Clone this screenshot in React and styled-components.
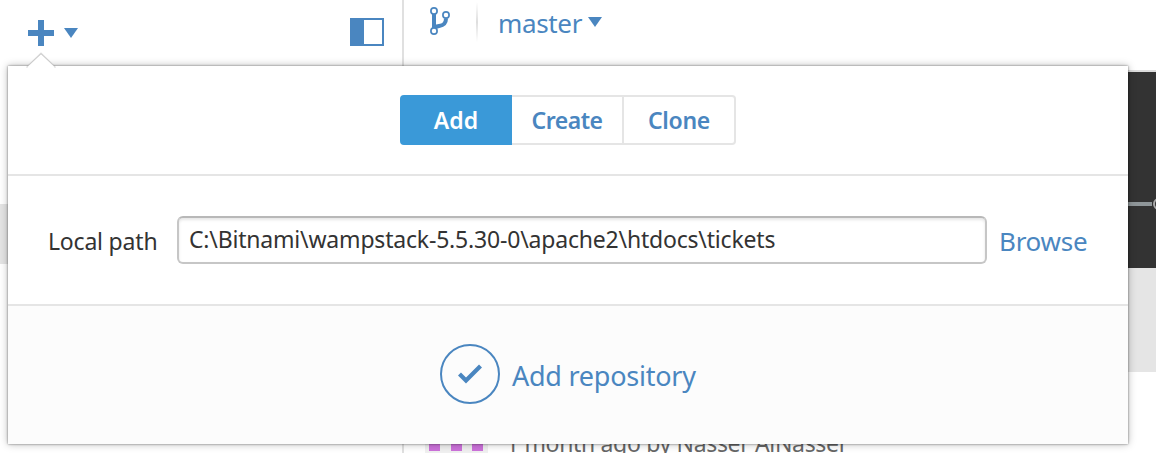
import React from "react";
import styled, { createGlobalStyle } from "styled-components";

const blue = "#4a86c0";
const line = "#e5e5e5";

const GlobalStyle = createGlobalStyle`
  * { box-sizing: border-box; }
  body {
    margin: 0;
    background: #fff;
    overflow: hidden;
    font-family: "Segoe UI", "Noto Sans", "Open Sans", sans-serif;
    color: #333;
  }
`;

const Window = styled.div`
  position: relative;
  display: flex;
  width: 1156px;
  height: 453px;
  overflow: hidden;
  background: #fff;
`;

const Sidebar = styled.aside`
  display: flex;
  flex-direction: column;
  width: 404px;
  border-right: 2px solid #e0e0e0;
`;

const SidebarBar = styled.header`
  display: flex;
  align-items: flex-start;
  height: 72px;
  padding: 18px 18px 0 28px;
`;

const AddIcon = styled.svg`
  margin-top: 2px;
`;

const Caret = styled.svg`
  margin: ${(p) => p.$margin};
`;

const PanelIcon = styled.svg`
  margin-left: auto;
`;

const SelectedRepository = styled.div`
  height: 60px;
  margin-top: 132px;
  background: #e4e4e4;
`;

const Main = styled.main`
  display: flex;
  flex: 1;
  flex-direction: column;
  > * { flex-shrink: 0; }
`;

const BranchBar = styled.header`
  display: flex;
  align-items: flex-start;
  height: 72px;
  padding-left: 25px;
  border-bottom: 2px solid #dcdcdc;
`;

const BranchIcon = styled.svg`
  margin-top: 6px;
`;

const BarDivider = styled.div`
  width: 2px;
  height: 40px;
  margin: 2px 20px 0 25px;
  background: linear-gradient(#fff, #dedede 50%, #fff);
`;

const BranchName = styled.span`
  padding-top: 5px;
  font-size: 26px;
  line-height: 36px;
  letter-spacing: -0.35px;
  color: ${blue};
`;

const Timeline = styled.div`
  display: flex;
  justify-content: flex-end;
  align-items: center;
  height: 196px;
  padding-top: 68px;
  background: #333;
`;

const Summary = styled.div`
  height: 104px;
  background: ${line};
`;

const Commit = styled.div`
  display: flex;
  align-items: flex-start;
  padding: 20px 0 0 21px;
`;

const CommitMeta = styled.span`
  margin: 35px 0 0 18px;
  font-size: 23px;
  line-height: 32px;
  letter-spacing: -0.34px;
  white-space: nowrap;
  color: #666;
`;

const Popover = styled.section`
  position: absolute;
  top: 66px;
  left: 8px;
  display: flex;
  flex-direction: column;
  width: 1120px;
  height: 378px;
  background: #fff;
  box-shadow: 0 0 2px rgba(0, 0, 0, 0.5), 0 0 8px rgba(0, 0, 0, 0.28);
`;

const Pointer = styled.svg`
  position: absolute;
  top: -15px;
  left: 16px;
`;

const TabSection = styled.div`
  display: flex;
  justify-content: center;
  height: 110px;
  padding-top: 29px;
  border-bottom: 2px solid ${line};
`;

const Tabs = styled.div`
  display: flex;
  height: 50px;
`;

const Tab = styled.button`
  width: 112px;
  padding: 0 0 1px;
  border: solid ${(p) => (p.$active ? "#3a99d8" : line)};
  border-width: 2px 2px 2px ${(p) => (p.$active ? "2px" : "0")};
  background: ${(p) => (p.$active ? "#3a99d8" : "#fff")};
  color: ${(p) => (p.$active ? "#fff" : blue)};
  font: 600 23px/44px "Segoe UI", "Noto Sans", "Open Sans", sans-serif;
  letter-spacing: ${(p) => p.$spacing};
  &:first-child { border-radius: 4px 0 0 4px; }
  &:last-child { border-radius: 0 4px 4px 0; }
`;

const PathSection = styled.div`
  display: flex;
  align-items: center;
  height: 130px;
  padding: 0 40px;
  border-bottom: 2px solid ${line};
`;

const Label = styled.label`
  width: 129px;
  padding-top: 2px;
  font-size: 23px;
  letter-spacing: -0.2px;
  white-space: nowrap;
`;

const PathField = styled.input`
  width: 810px;
  height: 48px;
  padding: 0 10px 2px;
  border: 2px solid #c6c6c6;
  border-top-color: #b8b8b8;
  border-radius: 6px;
  outline: none;
  box-shadow: inset 0 2px 3px rgba(0, 0, 0, 0.1);
  color: #333;
  font: 23px "Segoe UI", "Noto Sans", "Open Sans", sans-serif;
  letter-spacing: -0.19px;
`;

const Browse = styled.a`
  margin-left: 12px;
  padding-top: 2px;
  font-size: 26px;
  letter-spacing: -0.25px;
  color: ${blue};
`;

const Footer = styled.footer`
  display: flex;
  flex: 1;
  align-items: center;
  gap: 12px;
  padding: 0 0 2px 432px;
  background: #fcfcfc;
`;

const Submit = styled.span`
  padding-top: 3px;
  font-size: 27px;
  letter-spacing: -0.25px;
  white-space: nowrap;
  color: ${blue};
`;

export default function App() {
  return (
    <>
      <GlobalStyle />
      <Window>
        <Sidebar>
          <SidebarBar>
            <AddIcon width="26" height="26" fill={blue}>
              <path d="M10 0h6v10h10v6H16v10h-6V16H0v-6h10z" />
            </AddIcon>
            <Caret $margin="10px 0 0 10px" width="14" height="10" fill={blue}>
              <path d="M0 0h14L7 10z" />
            </Caret>
            <PanelIcon width="34" height="28">
              <rect x="1" y="1" width="32" height="26" fill="none" stroke={blue} strokeWidth="2" />
              <rect width="14" height="28" fill={blue} />
            </PanelIcon>
          </SidebarBar>
          <SelectedRepository />
        </Sidebar>
        <Main>
          <BranchBar>
            <BranchIcon width="22" height="30" fill="none" stroke={blue}>
              <path d="M5 8v14M17 12.500c0 6.500-4 7-7 7.500-3 .5-4.500 1.500-5 3" strokeWidth="4" />
              <circle cx="5" cy="5" r="3.100" fill="#fff" strokeWidth="1.700" />
              <circle cx="17" cy="9" r="3.100" fill="#fff" strokeWidth="1.700" />
              <circle cx="5" cy="25" r="3.100" fill="#fff" strokeWidth="1.700" />
            </BranchIcon>
            <BarDivider />
            <BranchName>master</BranchName>
            <Caret $margin="17px 0 0 6px" width="14" height="10" fill={blue}>
              <path d="M0 0h14L7 10z" />
            </Caret>
          </BranchBar>
          <Timeline>
            <svg width="28" height="14">
              <path d="M0 7h24" stroke="#8f9699" strokeWidth="4" />
              <circle cx="31" cy="7" r="5" fill="#333" stroke="#aaa" strokeWidth="2" />
            </svg>
          </Timeline>
          <Summary />
          <Commit>
            <svg width="63" height="61">
              <rect width="63" height="61" fill="#f0f0f0" />
              <path d="M4 48h11v11H4zM26 48h11v11H26zM47 48h11v11H47z" fill="#cd72db" />
            </svg>
            <CommitMeta>1 month ago by Nasser AlNasser</CommitMeta>
          </Commit>
        </Main>
        <Popover>
          <Pointer width="34" height="17">
            <path d="M2 15.500 17 1 32 15.500V17H2z" fill="#000" fillOpacity=".07" />
            <path d="M3 15.500 17 2 31 15.500z" fill="#c4c4c4" />
            <path d="M4 15.500 17 3.200 30 15.500V17H4z" fill="#fff" />
          </Pointer>
          <TabSection>
            <Tabs>
              <Tab $active $spacing="0">Add</Tab>
              <Tab $spacing="-0.5px">Create</Tab>
              <Tab $spacing="-0.3px">Clone</Tab>
            </Tabs>
          </TabSection>
          <PathSection>
            <Label htmlFor="path">Local path</Label>
            <PathField id="path" readOnly value={"C:\\Bitnami\\wampstack-5.5.30-0\\apache2\\htdocs\\tickets"} />
            <Browse>Browse</Browse>
          </PathSection>
          <Footer>
            <svg width="60" height="60" fill="none" stroke={blue}>
              <circle cx="30" cy="30" r="29" strokeWidth="2" />
              <path d="M19.500 30l6.500 6.500L40.500 22" strokeWidth="4.200" />
            </svg>
            <Submit>Add repository</Submit>
          </Footer>
        </Popover>
      </Window>
    </>
  );
}
